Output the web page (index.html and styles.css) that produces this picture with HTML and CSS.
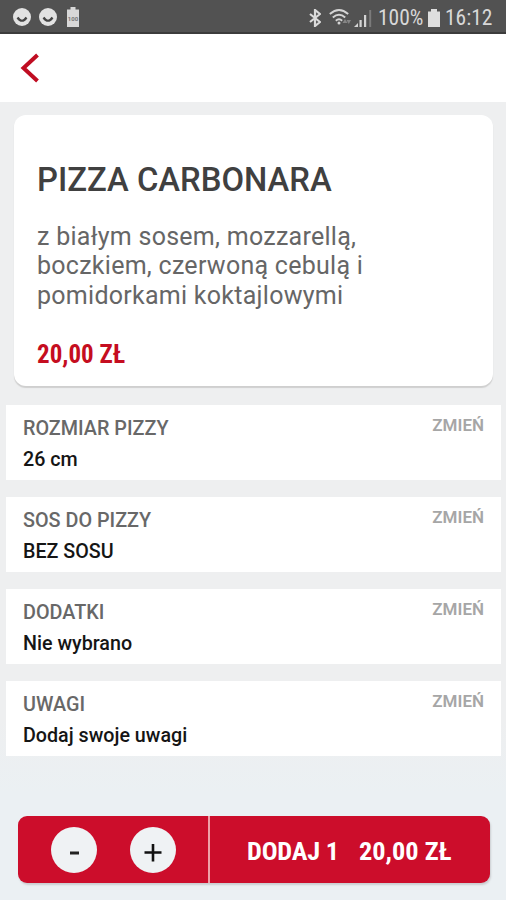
FILE: index.html
```html
<!DOCTYPE html>
<html lang="pl">
<head>
<meta charset="utf-8">
<title>Pizza Carbonara</title>
<link rel="stylesheet" href="styles.css">
</head>
<body>
<div class="status">
  <div class="notices">
    <svg class="face" viewBox="0 0 18 18"><circle cx="9" cy="9" r="9" fill="#e2e2e2"/><path d="M4.500 9.500Q9 16 13.500 9.500" fill="none" stroke="#454545" stroke-width="2.200"/></svg>
    <svg class="face" viewBox="0 0 18 18"><circle cx="9" cy="9" r="9" fill="#e2e2e2"/><path d="M4.500 9.500Q9 16 13.500 9.500" fill="none" stroke="#454545" stroke-width="2.200"/></svg>
    <svg class="charge" viewBox="0 0 14 20"><path d="M1 2.500h3.500V0h5v2.500H13V20H1z" fill="#d8d8d8"/><text x="7" y="13.500" text-anchor="middle" class="tiny">100</text></svg>
  </div>
  <div class="system">
    <svg class="bluetooth" viewBox="0 0 12 18"><path d="M1 5l10 8-5 4V1l5 4-10 8" fill="none" stroke="#dadada" stroke-width="2.200"/></svg>
    <svg class="wifi" viewBox="0 0 23 17"><g fill="none" stroke="#d4d4d4" stroke-width="1.900"><path d="M.8 5Q10 -3 19.200 5M3.800 8.500Q10 3 16.200 8.500M6.800 11.700Q10 9 13.200 11.700"/></g><circle cx="10" cy="14" r="1.500" fill="#d4d4d4"/><path d="M13.500 14l2.500-4 2.500 4zM17.500 11h4.500l-2.200 4z" fill="#858585"/></svg>
    <svg class="signal" viewBox="0 0 18 18"><path d="M0 18l4-4v4zM5.500 11h2.200v7H5.500zM10 6h2.200v12H10z" fill="#d4d4d4"/><path d="M15.200 1h2v17h-2z" fill="#7b7b7b"/></svg>
    <span class="percent">100%</span>
    <svg class="battery" viewBox="0 0 12 18"><path d="M0 2.500h3V0h6v2.500h3V18H0z" fill="#dedede"/></svg>
    <span class="time">16:12</span>
  </div>
</div>
<header class="bar">
  <svg class="back" viewBox="0 0 20 30"><path d="M17.500 2L3.500 15l14 13" fill="none" stroke="#c00d22" stroke-width="4"/></svg>
</header>
<main>
  <section class="card">
    <h1>PIZZA CARBONARA</h1>
    <p>z białym sosem, mozzarellą,<br>boczkiem, czerwoną cebulą i<br>pomidorkami koktajlowymi</p>
    <strong class="price">20,00 ZŁ</strong>
  </section>
  <section class="options">
    <div class="option"><div><h2>ROZMIAR PIZZY</h2><b>26 cm</b></div><span class="change">ZMIEŃ</span></div>
    <div class="option"><div><h2>SOS DO PIZZY</h2><b>BEZ SOSU</b></div><span class="change">ZMIEŃ</span></div>
    <div class="option"><div><h2>DODATKI</h2><b>Nie wybrano</b></div><span class="change">ZMIEŃ</span></div>
    <div class="option"><div><h2>UWAGI</h2><b>Dodaj swoje uwagi</b></div><span class="change">ZMIEŃ</span></div>
  </section>
</main>
<footer class="order">
  <div class="stepper">
    <button><svg viewBox="0 0 46 46"><path d="M19 26h9" stroke="#222" stroke-width="3"/></svg></button>
    <button><svg viewBox="0 0 46 46"><path d="M14.500 25.500h17M23 17v17.500" stroke="#111" stroke-width="2.600"/></svg></button>
  </div>
  <div class="add"><span class="count">DODAJ 1</span><span class="sum">20,00 ZŁ</span></div>
</footer>
</body>
</html>
```

FILE: styles.css
```css
* { box-sizing: border-box; }
body { margin: 0; height: 900px; display: flex; flex-direction: column; overflow: hidden; background: linear-gradient(#eeeff0 0, #eeeff0 80%, #ebf0f3 88%, #ebf0f3 100%); font-family: Roboto, sans-serif; color: #404040; }
svg { display: block; flex: none; }
h1, h2, p { margin: 0; font-weight: 400; white-space: nowrap; }
.status { height: 34px; flex: none; display: flex; justify-content: space-between; background: #525252; border-bottom: 2px solid #3c3c3c; padding: 0 14px 0 13px; }
.notices { display: flex; align-items: center; gap: 8px; padding-top: 2px; }
.face { width: 18px; height: 18px; }
.charge { width: 14px; height: 20px; margin-left: 1px; }
.tiny { font-size: 6px; font-weight: 700; fill: #777; }
.system { display: flex; align-items: center; padding-top: 3px; color: #d8d8d8; font-size: 21.500px; line-height: 30px; font-stretch: 75%; }
.bluetooth { width: 12px; height: 18px; }
.wifi { width: 23px; height: 17px; margin-left: 8px; }
.signal { width: 18px; height: 18px; margin-left: 2px; }
.percent { width: 44px; margin-left: 6px; }
.battery { width: 12px; height: 18px; margin-left: 6px; }
.time { width: 47px; margin-left: 5px; }
.bar { height: 68px; flex: none; background: #fff; padding: 19px 0 0 20px; }
.back { width: 20px; height: 30px; }
.card { margin: 13px 13px 0 14px; height: 271px; border-radius: 12px; background: #fff; box-shadow: 0 2px 1px #cfcfcf; padding: 43px 23px 0; }
h1 { font-size: 32.800px; line-height: 44px; font-weight: 500; }
p { margin-top: 19.500px; font-size: 25px; line-height: 29.500px; color: #666; letter-spacing: .27px; }
.price { display: block; margin-top: 27.500px; font-size: 25px; line-height: 34px; font-stretch: 75%; color: #c50d20; }
.options { display: grid; gap: 17px; margin: 19px 5px 0 6px; }
.option { height: 75px; display: flex; justify-content: space-between; background: #fff; padding: 9px 17px 0; }
h2 { font-size: 19.800px; line-height: 28px; font-weight: 470; color: #686868; padding-top: 1px; }
.option b { display: block; margin-top: 4px; font-size: 19.700px; line-height: 25px; font-weight: 500; color: #151515; }
.change { font-size: 17px; line-height: 23px; font-weight: 600; color: #a6a6a6; }
.order { margin: 60px 16px 0 18px; height: 67px; flex: none; display: flex; border-radius: 9px; background: #cc0d2b; box-shadow: 1px 2px 2px #cbcdd0; }
.stepper { width: 192px; display: flex; gap: 33px; align-items: center; padding-left: 33px; border-right: 2px solid #efa0a8; }
button { width: 46px; height: 46px; padding: 0; border: 0; border-radius: 50%; background: #eff2f4; }
button svg { width: 46px; height: 46px; }
.add { display: flex; align-items: center; padding: 2px 0 0 37px; color: #fff; font-size: 26.300px; font-weight: 700; font-stretch: 75%; white-space: nowrap; }
.count { width: 112px; letter-spacing: -.2px; }
```
